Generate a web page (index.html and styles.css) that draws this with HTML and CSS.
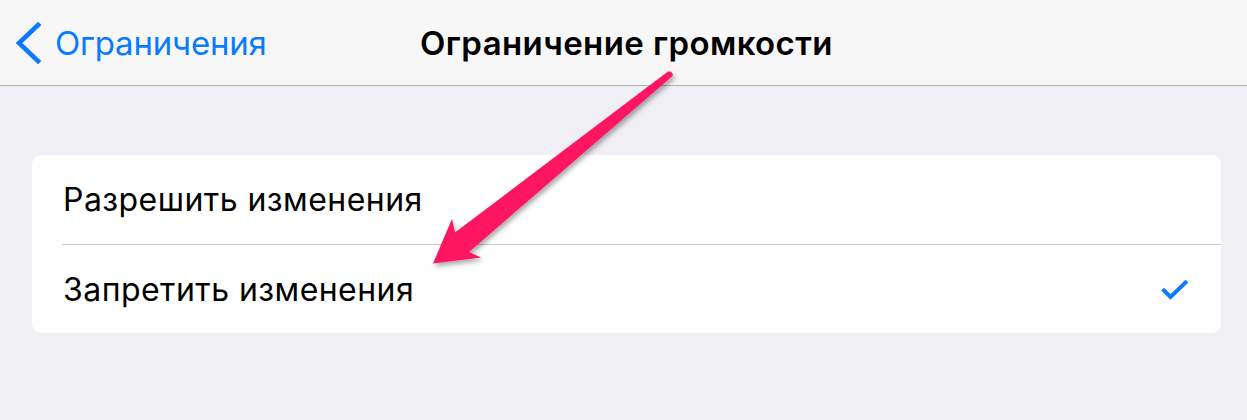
FILE: index.html
```html
<!DOCTYPE html>
<html lang="ru">
<head>
<meta charset="utf-8">
<link rel="stylesheet" href="styles.css">
</head>
<body>
<div class="screen">
  <header class="navbar">
    <div class="back">
      <svg class="chevron" width="30" height="46" viewBox="0 0 30 46"><path d="M24 5 L5 23 L24 41" fill="none" stroke="#0a7aff" stroke-width="4.6" stroke-linecap="square" stroke-linejoin="miter"/></svg>
      <span class="back-label">Ограничения</span>
    </div>
    <div class="title">Ограничение громкости</div>
  </header>
  <main class="content">
    <section class="card">
      <div class="row"><span class="row-label">Разрешить изменения</span></div>
      <div class="row"><span class="row-label">Запретить изменения</span>
        <svg class="check" width="28" height="22" viewBox="0 0 28 22"><path d="M3 11.5 L9.5 18 L24.5 3.5" fill="none" stroke="#0a7aff" stroke-width="4" stroke-linecap="square" stroke-linejoin="miter"/></svg>
      </div>
    </section>
  </main>
  <svg class="arrow" width="1247" height="420" viewBox="0 0 1247 420">
    <defs>
      <filter id="sh" x="-20%" y="-20%" width="140%" height="140%">
        <feDropShadow dx="2" dy="3" stdDeviation="2.5" flood-color="#000" flood-opacity="0.35"/>
      </filter>
    </defs>
    <path d="M670.5 71.5 Q673.5 73.5 672.5 76 L469 252 L481 257.5 L433 263.5 L452 219 L455 232.5 L668 71.5 Z" fill="#ff1260" filter="url(#sh)"/>
  </svg>
</div>
</body>
</html>
```
FILE: styles.css
```css
html, body {
  margin: 0;
  padding: 0;
}
body {
  width: 1247px;
  height: 420px;
  overflow: hidden;
  background: #efeff4;
  font-family: "Inter", "Roboto", "Liberation Sans", sans-serif;
}
.screen {
  position: relative;
  width: 1247px;
  height: 420px;
}
.navbar {
  height: 85px;
  background: #f7f7f8;
  border-bottom: 1px solid #b2b2b2;
  display: flex;
  align-items: center;
  position: relative;
}
.back {
  display: flex;
  align-items: center;
  padding-left: 14px;
  gap: 11px;
  color: #0a7aff;
}
.chevron {
  display: block;
}
.back-label {
  font-size: 33px;
  letter-spacing: -0.2px;
}
.title {
  position: absolute;
  left: 0;
  right: 0;
  text-align: center;
  padding-left: 6px;
  font-size: 33px;
  font-weight: 600;
  color: #000;
  letter-spacing: 0.4px;
}
.content {
  padding: 69px 26px 0 32px;
}
.card {
  background: #fff;
  border-radius: 9px;
  overflow: hidden;
}
.row {
  height: 89px;
  display: flex;
  align-items: center;
  justify-content: space-between;
  margin-left: 30px;
  padding-right: 32px;
  box-sizing: border-box;
}
.row + .row {
  border-top: 1px solid #c8c7cc;
}
.row-label {
  font-size: 32px;
  color: #000;
  letter-spacing: 0.45px;
  padding-left: 1px;
}
.check {
  display: block;
  margin-top: 2px;
}
.arrow {
  position: absolute;
  left: 0;
  top: 0;
  pointer-events: none;
}
```
